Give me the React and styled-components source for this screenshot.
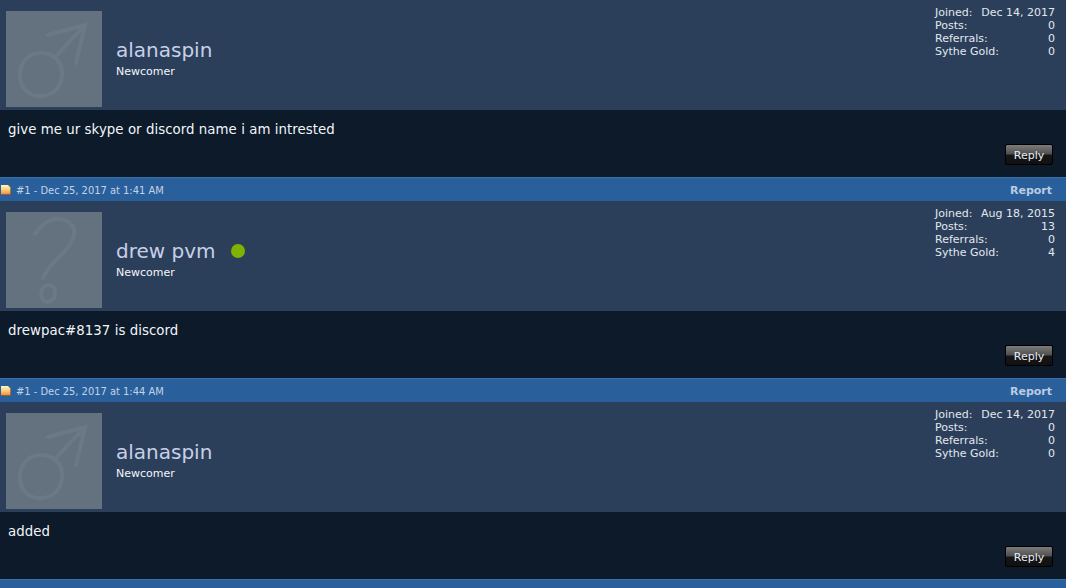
import React from 'react';
import styled, { createGlobalStyle } from 'styled-components';

const GlobalStyle = createGlobalStyle`
  html, body {
    margin: 0;
    padding: 0;
    height: 100%;
    overflow: hidden;
    background: #0c1a2a;
    font-family: "DejaVu Sans", Verdana, sans-serif;
  }
`;

const Thread = styled.div`
  width: 1066px;
  height: 588px;
  overflow: hidden;
`;

const PostHeader = styled.div`
  height: 24px;
  box-sizing: border-box;
  display: flex;
  align-items: center;
  justify-content: space-between;
  padding: 1px 14px 0 1px;
  background: #29609c;
  border-top: 1px solid #3a70aa;
  font-size: 11px;
  color: #c4d2e6;
`;

const PostMeta = styled.div`
  display: flex;
  align-items: center;
  gap: 5px;
  font-stretch: condensed;
`;

const ReportLink = styled.a`
  font-weight: 700;
  color: #bccbe0;
`;

const UserPanel = styled.div`
  height: 110px;
  box-sizing: border-box;
  display: flex;
  justify-content: space-between;
  padding: 6px 11px 0 6px;
  background: #2b3f5a;
`;

const UserIdentity = styled.div`
  display: flex;
  align-items: flex-start;
  gap: 14px;
  padding-top: 5px;
`;

const Avatar = styled.div`
  width: 96px;
  height: 96px;
  background: #64717f;
  overflow: hidden;
`;

const UserText = styled.div`
  padding-top: 25px;
`;

const NameRow = styled.div`
  display: flex;
  align-items: center;
  gap: 15px;
  height: 28px;
  font-size: 20px;
  color: #c8d0e8;
`;

const OnlineDot = styled.span`
  width: 14px;
  height: 14px;
  border-radius: 50%;
  background: #80b200;
`;

const UserRank = styled.div`
  margin-top: 1px;
  font-size: 11px;
  line-height: 14px;
  color: #f4f6fa;
`;

const Stats = styled.div`
  width: 120px;
  font-size: 11px;
  line-height: 13px;
  color: #e2e7ee;
`;

const StatRow = styled.div`
  display: flex;
  justify-content: space-between;
  white-space: nowrap;
`;

const PostBody = styled.div`
  height: 67px;
  box-sizing: border-box;
  display: flex;
  flex-direction: column;
  justify-content: space-between;
  padding: 12px 13px 12px 8px;
  background: #0c1a2a;
  font-size: 13.33px;
  letter-spacing: 0.05px;
  line-height: 16px;
  color: #f2f5f8;
`;

const ReplyButton = styled.button`
  align-self: flex-end;
  width: 48px;
  height: 21px;
  padding: 1px 0 0;
  border: 1px solid #000;
  border-radius: 2px;
  background: linear-gradient(to bottom, #7b7b7b 0%, #4f4f4f 48%, #161616 52%, #111 100%);
  font-family: inherit;
  font-size: 11px;
  letter-spacing: 0;
  color: #e8eef6;
`;

const NoteIcon = () => (
  <svg width="10" height="10" viewBox="0 0 10 10">
    <defs>
      <linearGradient id="note" x1="0" y1="0" x2="0" y2="1">
        <stop offset="0" stopColor="#fff6c4" />
        <stop offset="0.5" stopColor="#fbcb74" />
        <stop offset="1" stopColor="#ee7f3a" />
      </linearGradient>
    </defs>
    <path d="M0 0H7.5L10 2.5V10H0Z" fill="url(#note)" />
    <path d="M7.5 0.3L9.7 2.5V9.7H0" fill="none" stroke="#4e4038" strokeWidth="0.7" />
  </svg>
);

const MaleMark = () => (
  <svg width="96" height="96" viewBox="0 0 96 96" fill="none" stroke="#6b7986" strokeWidth="4" strokeLinecap="round">
    <path d="M35 42C22 42 13 52 14 66C15 79 24 86 36 85C49 84 57 74 56 60C55 49 46 42 35 42Z" />
    <path d="M49 46L78 15" />
    <path d="M42 24L79 14L70 52" />
  </svg>
);

const UnknownMark = () => (
  <svg width="96" height="96" viewBox="0 0 96 96" fill="none" stroke="#6b7986" strokeWidth="4" strokeLinecap="round">
    <path d="M29 22C35 13 44 6 53 7C65 8 71 16 67 27C61 41 44 50 37 66" />
    <path d="M42 73C35 74 33 84 38 89C44 92 50 86 49 79C48 75 46 73 42 73Z" />
  </svg>
);

const posts = [
  {
    id: 1,
    user: 'alanaspin',
    joined: 'Dec 14, 2017',
    posts: 0,
    referrals: 0,
    gold: 0,
    mark: 'male',
    text: 'give me ur skype or discord name i am intrested',
    date: 'Dec 25, 2017 at 1:41 AM',
  },
  {
    id: 2,
    user: 'drew pvm',
    joined: 'Aug 18, 2015',
    posts: 13,
    referrals: 0,
    gold: 4,
    mark: 'unknown',
    online: true,
    text: 'drewpac#8137 is discord',
    date: 'Dec 25, 2017 at 1:44 AM',
  },
  {
    id: 3,
    user: 'alanaspin',
    joined: 'Dec 14, 2017',
    posts: 0,
    referrals: 0,
    gold: 0,
    mark: 'male',
    text: 'added',
  },
];

const Post = ({ post }) => (
  <>
    <UserPanel>
      <UserIdentity>
        <Avatar>{post.mark === 'male' ? <MaleMark /> : <UnknownMark />}</Avatar>
        <UserText>
          <NameRow>
            {post.user}
            {post.online && <OnlineDot />}
          </NameRow>
          <UserRank>Newcomer</UserRank>
        </UserText>
      </UserIdentity>
      <Stats>
        <StatRow>
          <span>Joined:</span>
          <span>{post.joined}</span>
        </StatRow>
        <StatRow>
          <span>Posts:</span>
          <span>{post.posts}</span>
        </StatRow>
        <StatRow>
          <span>Referrals:</span>
          <span>{post.referrals}</span>
        </StatRow>
        <StatRow>
          <span>Sythe Gold:</span>
          <span>{post.gold}</span>
        </StatRow>
      </Stats>
    </UserPanel>
    <PostBody>
      <div>{post.text}</div>
      <ReplyButton>Reply</ReplyButton>
    </PostBody>
    <PostHeader>
      {post.date && (
        <>
          <PostMeta>
            <NoteIcon />
            <span>#1 - {post.date}</span>
          </PostMeta>
          <ReportLink>Report</ReportLink>
        </>
      )}
    </PostHeader>
  </>
);

const App = () => (
  <Thread>
    <GlobalStyle />
    {posts.map(post => (
      <Post key={post.id} post={post} />
    ))}
  </Thread>
);

export default App;
